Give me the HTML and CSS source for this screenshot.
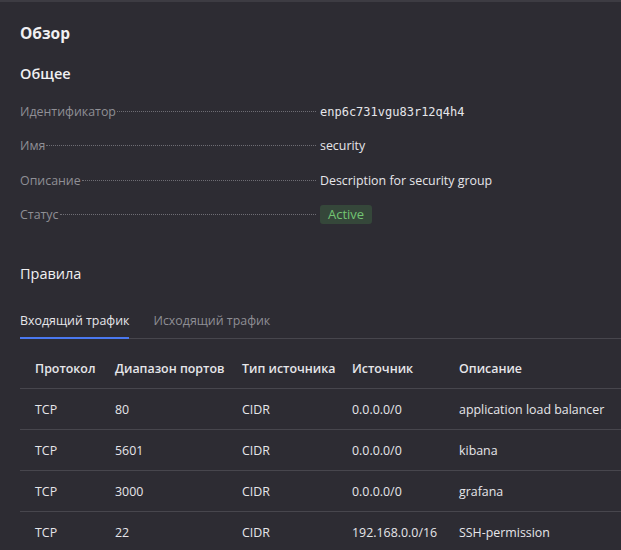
FILE: index.html
```html
<!DOCTYPE html>
<html lang="ru">
<head>
<meta charset="utf-8">
<title>Обзор</title>
<link rel="stylesheet" href="styles.css">
</head>
<body>
<div class="page">
  <h1 class="title">Обзор</h1>
  <h2 class="section">Общее</h2>
  <dl class="props">
    <div class="prop"><dt><span>Идентификатор</span></dt><dd class="mono">enp6c731vgu83r12q4h4</dd></div>
    <div class="prop"><dt><span>Имя</span></dt><dd>security</dd></div>
    <div class="prop"><dt><span>Описание</span></dt><dd>Description for security group</dd></div>
    <div class="prop"><dt><span>Статус</span></dt><dd><span class="badge">Active</span></dd></div>
  </dl>
  <h2 class="section rules">Правила</h2>
  <div class="tabs">
    <div class="tab active">Входящий трафик</div>
    <div class="tab">Исходящий трафик</div>
  </div>
  <table class="grid">
    <colgroup>
      <col class="c1"><col class="c2"><col class="c3"><col class="c4"><col>
    </colgroup>
    <thead>
      <tr><th>Протокол</th><th>Диапазон портов</th><th>Тип источника</th><th>Источник</th><th>Описание</th></tr>
    </thead>
    <tbody>
      <tr><td>TCP</td><td>80</td><td>CIDR</td><td>0.0.0.0/0</td><td>application load balancer</td></tr>
      <tr><td>TCP</td><td>5601</td><td>CIDR</td><td>0.0.0.0/0</td><td>kibana</td></tr>
      <tr><td>TCP</td><td>3000</td><td>CIDR</td><td>0.0.0.0/0</td><td>grafana</td></tr>
      <tr><td>TCP</td><td>22</td><td>CIDR</td><td>192.168.0.0/16</td><td>SSH-permission</td></tr>
    </tbody>
  </table>
</div>
</body>
</html>
```
FILE: styles.css
```css
html, body {
  margin: 0;
  padding: 0;
  background: #2d2c33;
}
body {
  font-family: "Open Sans", "Noto Sans", sans-serif;
  font-size: 12.4px;
  color: #e6e6ea;
  overflow: hidden;
}
.page {
  border-top: 2px solid #3d3c43;
  padding: 0 0 0 20px;
  height: 548px;
}
.title {
  margin: 0;
  padding-top: 21px;
  font-size: 15.5px;
  line-height: 20px;
  font-weight: 700;
  color: #f0f0f2;
}
.section {
  margin: 21px 0 0;
  font-size: 14.5px;
  line-height: 20px;
  font-weight: 600;
  color: #f0f0f2;
}
.props {
  margin: 18px 0 0;
  display: flex;
  flex-direction: column;
  gap: 14.4px;
}
.prop {
  display: flex;
  align-items: baseline;
  height: 20px;
  line-height: 20px;
}
.prop dt {
  width: 300px;
  flex: none;
  color: #8f8f95;
  display: flex;
  align-items: baseline;
}
.prop dt::after {
  content: "";
  flex: 1;
  border-bottom: 1px dotted #6e6d74;
  margin: 0 4px 0 1px;
  transform: translateY(-4px);
}
.prop dd {
  margin: 0;
  color: #e6e6ea;
}
.mono {
  font-family: "DejaVu Sans Mono", monospace;
  font-size: 12px;
}
.badge {
  display: inline-block;
  background: #35473a;
  color: #72c472;
  border-radius: 3px;
  padding: 0 8px;
  line-height: 19px;
  font-size: 13px;
}
.rules {
  margin-top: 39px;
  font-weight: 500;
}
.tabs {
  margin-top: 27px;
  display: flex;
  gap: 24px;
  border-bottom: 1px solid #47464d;
}
.tab {
  padding-bottom: 6px;
  line-height: 20px;
  color: #8f8f95;
  border-bottom: 2px solid transparent;
  margin-bottom: -1px;
}
.tab.active {
  color: #e6e6ea;
  border-bottom-color: #4a78f0;
}
.grid {
  margin-top: 9px;
  width: 601px;
  border-collapse: collapse;
  table-layout: fixed;
}
.c1 { width: 80px; }
.c2 { width: 127px; }
.c3 { width: 110px; }
.c4 { width: 107px; }
.grid th, .grid td {
  padding: 0 0 0 15px;
  height: 40px;
  text-align: left;
  white-space: nowrap;
  border-bottom: 1px solid #47464d;
}
.grid th {
  font-weight: 600;
  color: #e6e6ea;
}
.grid tbody tr:last-child td {
  border-bottom: none;
}
```
